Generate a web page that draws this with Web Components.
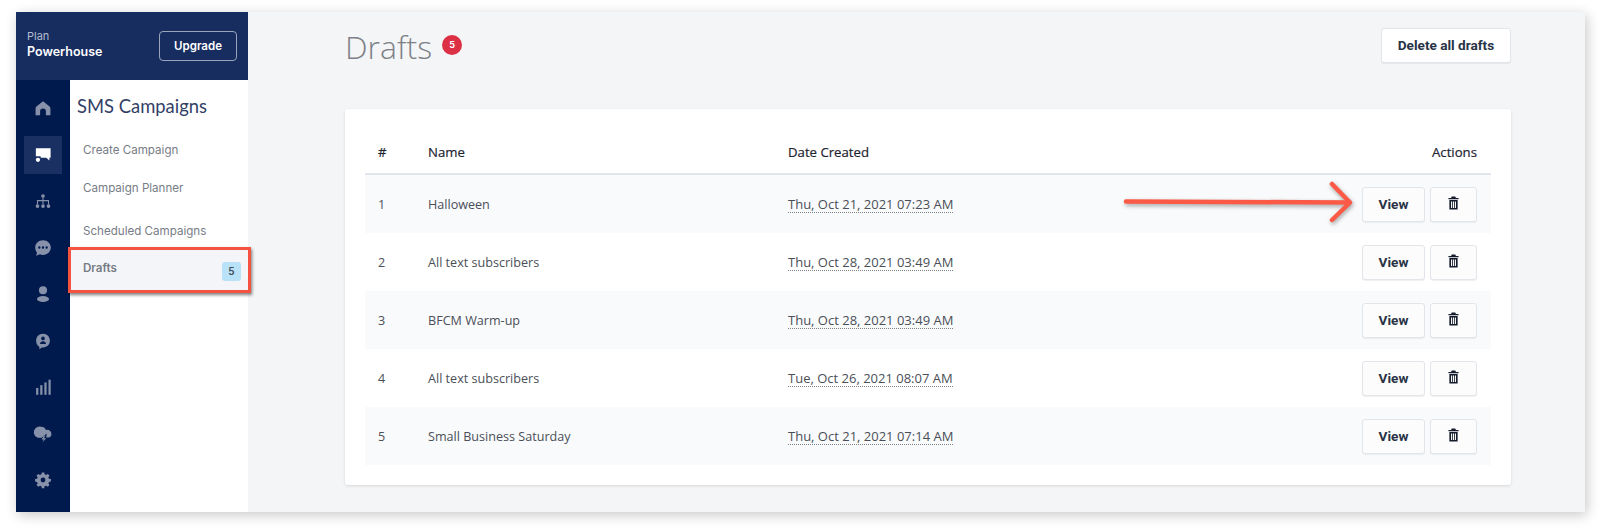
<!DOCTYPE html>
<html>
<head>
<meta charset="utf-8">
<title>Drafts</title>
<style>
    html, body { margin: 0; padding: 0; background: #fff; }
    body { width: 1600px; height: 531px; overflow: hidden; }
</style>
</head>
<body>
<app-shell>
    <plan-header slot="header" plan="Powerhouse"></plan-header>
    <icon-rail slot="rail"></icon-rail>
    <sub-nav slot="nav" title="SMS Campaigns">
        <nav-item>Create Campaign</nav-item>
        <nav-item>Campaign Planner</nav-item>
        <nav-item class="gap">Scheduled Campaigns</nav-item>
        <nav-item active badge="5">Drafts</nav-item>
    </sub-nav>
    <drafts-page slot="main" count="5">
        <draft-row num="1" name="Halloween" date="Thu, Oct 21, 2021 07:23 AM"></draft-row>
        <draft-row num="2" name="All text subscribers" date="Thu, Oct 28, 2021 03:49 AM"></draft-row>
        <draft-row num="3" name="BFCM Warm-up" date="Thu, Oct 28, 2021 03:49 AM"></draft-row>
        <draft-row num="4" name="All text subscribers" date="Tue, Oct 26, 2021 08:07 AM"></draft-row>
        <draft-row num="5" name="Small Business Saturday" date="Thu, Oct 21, 2021 07:14 AM"></draft-row>
    </drafts-page>
</app-shell>

<script>
const BODY_FONT = '"Open Sans", "Noto Sans", sans-serif';

class AppShell extends HTMLElement {
    connectedCallback() {
        this.attachShadow({ mode: 'open' });
        this.shadowRoot.innerHTML = `
            <style>
                :host {
                    display: grid;
                    grid-template-columns: 232px 1fr;
                    width: 1569px;
                    height: 500px;
                    margin: 12px 15px 19px 16px;
                    position: relative;
                    background: #f4f5f7;
                    box-shadow: 2px 3px 12px rgba(0,0,0,0.22);
                }
                .side {
                    display: flex;
                    flex-direction: column;
                    height: 500px;
                }
                .lower {
                    display: flex;
                    flex: 1;
                    min-height: 0;
                }
                /* annotations drawn on top of the screenshot */
                .mark {
                    position: absolute;
                    left: 52px;
                    top: 235px;
                    width: 177px;
                    height: 40px;
                    border: 3px solid #f4533f;
                    box-shadow: 1px 2px 3px rgba(0,0,0,0.5);
                    pointer-events: none;
                }
                .arrow {
                    position: absolute;
                    left: 1099px;
                    top: 165px;
                    filter: drop-shadow(1px 2px 2px rgba(0,0,0,0.35));
                    pointer-events: none;
                }
            </style>
            <div class="side">
                <slot name="header"></slot>
                <div class="lower">
                    <slot name="rail"></slot>
                    <slot name="nav"></slot>
                </div>
            </div>
            <slot name="main"></slot>
            <div class="mark"></div>
            <svg class="arrow" width="250" height="50" viewBox="0 0 250 50" fill="none" stroke="#fb5a47" stroke-width="4.5" stroke-linecap="round" stroke-linejoin="round">
                <path d="M11 24.5 L234 25.5"/>
                <path d="M217 7 L235 25.5 L217 43"/>
            </svg>
        `;
    }
}

class PlanHeader extends HTMLElement {
    connectedCallback() {
        this.attachShadow({ mode: 'open' });
        const plan = this.getAttribute('plan') || '';
        this.shadowRoot.innerHTML = `
            <style>
                :host {
                    display: flex;
                    align-items: center;
                    justify-content: space-between;
                    height: 68px;
                    box-sizing: border-box;
                    padding: 0 11px 0 11px;
                    background: #172c5f;
                    color: #fff;
                    font-family: Inter, sans-serif;
                }
                .text { margin-top: -4px; }
                .label { font-size: 11px; line-height: 15px; color: #b4bdd0; }
                .plan { font-size: 12.5px; line-height: 15px; font-weight: 600; }
                button {
                    width: 78px;
                    height: 30px;
                    padding: 0;
                    background: transparent;
                    color: #fff;
                    border: 1px solid #9aa5bc;
                    border-radius: 4px;
                    font: 600 11.5px Inter, sans-serif;
                }
            </style>
            <div class="text">
                <div class="label">Plan</div>
                <div class="plan">${plan}</div>
            </div>
            <button>Upgrade</button>
        `;
    }
}

const RAIL_ICONS = [
    // home
    '<path transform="translate(1.2 1.4) scale(.9)" d="M12 3.5 L20 10 Q21 11 21 12.5 V20.5 H15.5 V16 a3.5 3.5 0 0 0 -7 0 V20.5 H3 V12.5 Q3 11 4 10 Z"/>',
    // sms bubble with dot
    '<g transform="translate(1.6 1.6) scale(.87)"><path d="M3 3.5 H21.5 V15.5 H20 V19 L16 15.5 H9 V13.5 H3 Z"/><circle cx="5.6" cy="18" r="2.7"/></g>',
    // sitemap
    '<circle cx="12" cy="6.5" r="2"/><circle cx="6" cy="17.5" r="2"/><circle cx="12" cy="17.5" r="2"/><circle cx="18" cy="17.5" r="2"/><path d="M11.4 8 h1.2 v3 H18.6 v4.5 h-1.2 V12.2 H12.6 v3.3 h-1.2 V12.2 H6.6 v3.3 H5.4 V11 h6 Z"/>',
    // chat with dots
    '<path fill-rule="evenodd" d="M12 3.5 c5 0 8.5 3.6 8.5 8 s-3.5 8 -8.5 8 c-1.3 0 -2.4 -.2 -3.4 -.7 L4.5 20.5 l1 -3.6 C4.2 15.5 3.5 13.6 3.5 11.5 c0 -4.4 3.5 -8 8.5 -8 Z M8 10.2 a1.3 1.3 0 1 0 0 2.6 a1.3 1.3 0 0 0 0 -2.6 Z M12 10.2 a1.3 1.3 0 1 0 0 2.6 a1.3 1.3 0 0 0 0 -2.6 Z M16 10.2 a1.3 1.3 0 1 0 0 2.6 a1.3 1.3 0 0 0 0 -2.6 Z"/>',
    // user
    '<circle cx="12" cy="8" r="4.4"/><ellipse cx="12" cy="17.5" rx="6.6" ry="3.2"/>',
    // bubble with user
    '<path fill-rule="evenodd" d="M12 4 c4.5 0 7.5 3.2 7.5 7.5 s-3 7.5 -7.5 7.5 H10.8 L8 21 V18.3 C5.8 17 4.5 14.5 4.5 11.5 C4.5 7.2 7.5 4 12 4 Z M12 7.2 a2 2 0 1 0 0 4 a2 2 0 0 0 0 -4 Z M8.8 15.2 h6.4 c0 -1.8 -1.4 -3 -3.2 -3 s-3.2 1.2 -3.2 3 Z"/>',
    // bars
    '<rect x="4.5" y="13" width="2.4" height="7.5"/><rect x="9" y="10" width="2.4" height="10.5"/><rect x="13.5" y="7" width="2.4" height="13.5"/><rect x="18" y="4" width="2.4" height="16.5"/>',
    // cloud with bolt
    '<path d="M10 4 a5.5 5.5 0 0 1 5.2 3.6 a4.6 4.6 0 0 1 6 4.3 a4 4 0 0 1 -3.4 3.9 H15.5 L16 11.5 L10.5 16 H6.5 A5.8 5.8 0 0 1 10 4 Z"/><path d="M13 13.5 L10.5 18 H13 L11.2 21.5 L15.5 16.5 H13.2 L14.4 13.5 Z"/>',
    // gear
    '<path fill-rule="evenodd" d="M10.2 1 h3.6 l.5 2.8 2.2 .9 2.4 -1.6 2.5 2.5 -1.6 2.4 .9 2.2 2.8 .5 v3.6 l-2.8 .5 -.9 2.2 1.6 2.4 -2.5 2.5 -2.4 -1.6 -2.2 .9 -.5 2.8 h-3.6 l-.5 -2.8 -2.2 -.9 -2.4 1.6 -2.5 -2.5 1.6 -2.4 -.9 -2.2 -2.8 -.5 v-3.6 l2.8 -.5 .9 -2.2 -1.6 -2.4 2.5 -2.5 2.4 1.6 2.2 -.9 Z M12 8.5 a3.5 3.5 0 1 0 0 7 a3.5 3.5 0 0 0 0 -7 Z" transform="translate(3 3) scale(.75)"/>'
];

class IconRail extends HTMLElement {
    connectedCallback() {
        this.attachShadow({ mode: 'open' });
        const items = RAIL_ICONS.map((icon, i) => `
            <div class="item ${i === 1 ? 'active' : ''}">
                <svg width="22" height="22" viewBox="0 0 24 24" fill="currentColor">${icon}</svg>
            </div>`).join('');
        this.shadowRoot.innerHTML = `
            <style>
                :host {
                    display: flex;
                    flex-direction: column;
                    align-items: center;
                    gap: 8.5px;
                    width: 54px;
                    height: 100%;
                    box-sizing: border-box;
                    padding-top: 9px;
                    background: #001a4d;
                    color: #8792aa;
                }
                .item {
                    display: flex;
                    align-items: center;
                    justify-content: center;
                    width: 38px;
                    height: 38px;
                }
                .active { background: #1a2f62; color: #fff; }
            </style>
            ${items}
        `;
    }
}

class SubNav extends HTMLElement {
    connectedCallback() {
        this.attachShadow({ mode: 'open' });
        const title = this.getAttribute('title') || '';
        this.shadowRoot.innerHTML = `
            <style>
                :host {
                    display: block;
                    width: 178px;
                    height: 100%;
                    background: #fff;
                }
                h2 {
                    margin: 0;
                    padding: 13px 0 12px 7px;
                    font: 400 18.4px/26px Lato, sans-serif;
                    color: #333f66;
                }
                ::slotted(.gap) { margin-top: 4.5px; }
            </style>
            <h2>${title}</h2>
            <slot></slot>
        `;
    }
}

class NavItem extends HTMLElement {
    connectedCallback() {
        this.attachShadow({ mode: 'open' });
        const badge = this.getAttribute('badge');
        this.shadowRoot.innerHTML = `
            <style>
                :host {
                    display: flex;
                    align-items: center;
                    justify-content: space-between;
                    height: 38px;
                    box-sizing: border-box;
                    padding: 0 7px 0 13px;
                    font: 400 11.6px/16px Inter, sans-serif;
                    color: #777c86;
                }
                :host([active]) {
                    height: 40.5px;
                    align-items: flex-start;
                    padding-top: 10px;
                    background: #f4f5f9;
                    font-weight: 600;
                }
                .badge {
                    width: 19px;
                    height: 19px;
                    margin-top: 2px;
                    border-radius: 3px;
                    background: #b9e2f8;
                    color: #3f4a55;
                    font-size: 10px;
                    line-height: 19px;
                    text-align: center;
                }
            </style>
            <span><slot></slot></span>
            ${badge ? `<span class="badge">${badge}</span>` : ''}
        `;
    }
}

class AppButton extends HTMLElement {
    connectedCallback() {
        this.attachShadow({ mode: 'open' });
        this.shadowRoot.innerHTML = `
            <style>
                :host {
                    display: inline-flex;
                    align-items: center;
                    justify-content: center;
                    box-sizing: border-box;
                    background: #fff;
                    border: 1px solid #e2e5ea;
                    border-radius: 3px;
                    box-shadow: 0 1px 1px rgba(0,0,0,0.06);
                    color: #283345;
                    font: 700 13.6px Roboto, sans-serif;
                }
            </style>
            <slot></slot>
        `;
    }
}

class DraftsPage extends HTMLElement {
    connectedCallback() {
        this.attachShadow({ mode: 'open' });
        const count = this.getAttribute('count') || '';
        this.shadowRoot.innerHTML = `
            <style>
                :host {
                    display: block;
                    box-sizing: border-box;
                    height: 500px;
                    padding: 16px 74px 0 97px;
                    font-family: ${BODY_FONT};
                }
                .top {
                    display: flex;
                    align-items: center;
                    justify-content: space-between;
                    height: 34px;
                    margin-bottom: 47px;
                }
                .heading { display: flex; align-items: center; gap: 10px; padding-top: 4px; }
                h1 {
                    margin: 0;
                    font: 300 32px/34px "Open Sans", sans-serif;
                    color: #7d8187;
                }
                .count {
                    width: 20px;
                    height: 20px;
                    margin-top: -4px;
                    border-radius: 50%;
                    background: #dc3045;
                    color: #fff;
                    font: 700 9px/20px Inter, sans-serif;
                    text-align: center;
                }
                app-button.delete { width: 130px; height: 35px; }
                .card {
                    height: 376px;
                    box-sizing: border-box;
                    padding: 21px 20px 0;
                    background: #fff;
                    border-radius: 3px;
                    box-shadow: 0 1px 3px rgba(0,0,0,0.12);
                }
                .head {
                    display: grid;
                    grid-template-columns: 50px 360px 1fr auto;
                    align-items: center;
                    height: 43px;
                    padding: 0 14px 0 13px;
                    border-bottom: 2px solid #e2e6ec;
                    font-size: 13.2px;
                    font-weight: 400;
                    color: #1d2430;
                    -webkit-text-stroke: 0.2px #1d2430;
                }
            </style>
            <div class="top">
                <div class="heading">
                    <h1>Drafts</h1>
                    <span class="count">${count}</span>
                </div>
                <app-button class="delete">Delete all drafts</app-button>
            </div>
            <div class="card">
                <div class="head">
                    <span>#</span><span>Name</span><span>Date Created</span><span>Actions</span>
                </div>
                <slot></slot>
            </div>
        `;
    }
}

class DraftRow extends HTMLElement {
    connectedCallback() {
        this.attachShadow({ mode: 'open' });
        const num = this.getAttribute('num');
        const name = this.getAttribute('name');
        const date = this.getAttribute('date');
        this.shadowRoot.innerHTML = `
            <style>
                :host {
                    display: grid;
                    grid-template-columns: 50px 360px 1fr auto;
                    align-items: center;
                    height: 58px;
                    padding: 0 14px 0 13px;
                    font: 400 12.6px "Open Sans", sans-serif;
                    color: #4a4f57;
                }
                :host(:nth-child(odd)) { background: #f9fafc; }
                .date { justify-self: start; border-bottom: 1px dotted #7d8187; line-height: 16px; font-size: 13px; }
                .actions { display: flex; gap: 5px; }
                app-button { background: #fcfcfd; }
                .view { width: 63px; height: 35px; }
                .trash { width: 47px; height: 35px; padding-bottom: 3px; }
            </style>
            <span>${num}</span>
            <span>${name}</span>
            <span class="date">${date}</span>
            <div class="actions">
                <app-button class="view">View</app-button>
                <app-button class="trash">
                    <svg width="11" height="14" viewBox="0 0 12 15" fill="#141c2c">
                        <path d="M4 0.5 H8 L8.6 2 H11.5 V3.5 H0.5 V2 H3.4 Z"/>
                        <path fill-rule="evenodd" d="M1.5 4.3 H10.5 V14.5 H1.5 Z M3.3 5.8 V13 H4.5 V5.8 Z M5.4 5.8 V13 H6.6 V5.8 Z M7.5 5.8 V13 H8.7 V5.8 Z"/>
                    </svg>
                </app-button>
            </div>
        `;
    }
}

customElements.define('app-button', AppButton);
customElements.define('plan-header', PlanHeader);
customElements.define('icon-rail', IconRail);
customElements.define('nav-item', NavItem);
customElements.define('sub-nav', SubNav);
customElements.define('draft-row', DraftRow);
customElements.define('drafts-page', DraftsPage);
customElements.define('app-shell', AppShell);
</script>
</body>
</html>
